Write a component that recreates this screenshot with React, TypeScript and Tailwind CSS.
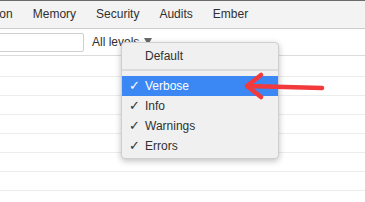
import React from "react";

const tabs = ["Application", "Memory", "Security", "Audits", "Ember"];
const levels = ["Verbose", "Info", "Warnings", "Errors"];

export default function App() {
  return (
    <div
      className="relative h-[202px] w-[365px] overflow-hidden bg-white text-[12px] text-[#303030]"
      style={{ fontFamily: '"Liberation Sans", Arial, sans-serif' }}
    >
      <div className="h-[1px] bg-[#6b6b6b]" />
      {/* tab strip */}
      <div className="flex h-[28px] items-center border-b border-[#cdcdcd] bg-[#f3f3f3]">
        <div className="-ml-[56px] flex">
          {tabs.map((t) => (
            <div key={t} className="whitespace-nowrap px-[10px] leading-[27px]">
              {t}
            </div>
          ))}
        </div>
      </div>

      {/* toolbar */}
      <div className="flex h-[27px] items-center border-b border-[#dcdcdc] bg-white">
        <div className="-ml-[10px] h-[19px] w-[94px] rounded-[2px] border border-[#cfcfcf] bg-white" />
        <div className="ml-[8px] flex items-center gap-[5px] whitespace-nowrap">
          <span>All levels</span>
          <svg width="8" height="7" viewBox="0 0 8 7" className="-mt-[2px]">
            <path d="M0 0 L8 0 L4 7 Z" fill="#6a6a6a" />
          </svg>
        </div>
      </div>

      {/* log rows */}
      <div className="flex flex-col">
        <div className="h-[21px] border-b border-[#ececec]" />
        {Array.from({ length: 6 }).map((_, i) => (
          <div key={i} className="h-[19px] border-b border-[#ececec]" />
        ))}
      </div>

      {/* level menu */}
      <div className="absolute left-[121px] top-[42px] w-[158px] rounded-[4px] border border-[#cfcfcf] bg-[#f0f0f0] pt-[3px] pb-[2px] shadow-[0_2px_6px_rgba(0,0,0,0.25)]">
        <div className="flex h-[20px] items-center pl-[23px]">Default</div>
        <div className="mt-[3px] mb-[5px] h-[2px] bg-[#dcdcdc]" />
        {levels.map((l) => (
          <div
            key={l}
            className={
              l === "Verbose"
                ? "flex h-[20px] items-center bg-[#3b87f4] pl-[7px] text-white"
                : "flex h-[20px] items-center pl-[7px]"
            }
          >
            <span
              className="w-[16px] text-[13px]"
              style={{ fontFamily: '"DejaVu Sans", sans-serif' }}
            >
              ✓
            </span>
            <span>{l}</span>
          </div>
        ))}
      </div>

      {/* annotation arrow */}
      <svg
        className="pointer-events-none absolute left-0 top-0"
        width="365"
        height="202"
        viewBox="0 0 365 202"
      >
        <g
          stroke="#f23a3c"
          strokeWidth="4.5"
          strokeLinecap="round"
          strokeLinejoin="round"
          fill="none"
        >
          <path d="M247 86 L322 88" />
          <path d="M261 75 L247 86 L261 97" />
        </g>
      </svg>
    </div>
  );
}
